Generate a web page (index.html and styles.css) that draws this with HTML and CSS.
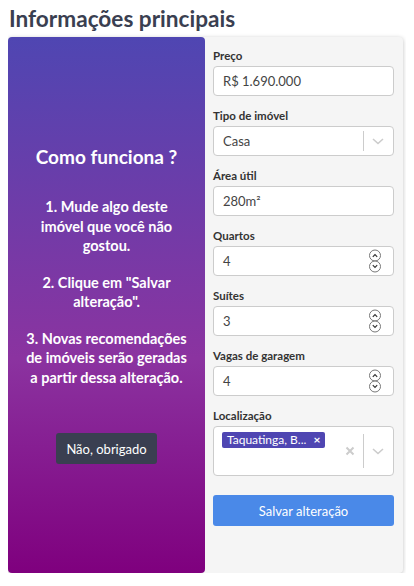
FILE: index.html
```html
<!DOCTYPE html>
<html lang="pt-BR">
<head>
<meta charset="utf-8">
<title>Informações principais</title>
<link rel="stylesheet" href="styles.css">
</head>
<body>
<h1 class="title">Informações principais</h1>
<div class="card">
  <div class="promo">
    <h2 class="promo-title">Como funciona ?</h2>
    <p class="promo-text">1. Mude algo deste imóvel que você não gostou.</p>
    <p class="promo-text">2. Clique em "Salvar alteração".</p>
    <p class="promo-text">3. Novas recomendações de imóveis serão geradas a partir dessa alteração.</p>
    <button class="btn-dark">Não, obrigado</button>
  </div>
  <form class="form">
    <div class="field">
      <label class="label">Preço</label>
      <div class="input"><span>R$ 1.690.000</span></div>
    </div>
    <div class="field">
      <label class="label">Tipo de imóvel</label>
      <div class="input select">
        <span class="value">Casa</span>
        <span class="sep"></span>
        <svg class="chev" width="20" height="20" viewBox="0 0 20 20"><path d="M5 8 L10 12.5 L15 8" fill="none" stroke="#ccc" stroke-width="1.6"/></svg>
      </div>
    </div>
    <div class="field">
      <label class="label">Área útil</label>
      <div class="input"><span>280m²</span></div>
    </div>
    <div class="field">
      <label class="label">Quartos</label>
      <div class="input number"><span class="value">4</span>
        <svg class="spin" width="14" height="26" viewBox="0 0 14 26"><circle cx="7" cy="7.5" r="5.5" fill="#fff" stroke="#777" stroke-width="1"/><path d="M4.8 8.8 L7 6.6 L9.2 8.8" fill="none" stroke="#333" stroke-width="1.2"/><circle cx="7" cy="18.5" r="5.5" fill="#fff" stroke="#777" stroke-width="1"/><path d="M4.8 17.2 L7 19.4 L9.2 17.2" fill="none" stroke="#333" stroke-width="1.2"/></svg>
      </div>
    </div>
    <div class="field">
      <label class="label">Suítes</label>
      <div class="input number"><span class="value">3</span>
        <svg class="spin" width="14" height="26" viewBox="0 0 14 26"><circle cx="7" cy="7.5" r="5.5" fill="#fff" stroke="#777" stroke-width="1"/><path d="M4.8 8.8 L7 6.6 L9.2 8.8" fill="none" stroke="#333" stroke-width="1.2"/><circle cx="7" cy="18.5" r="5.5" fill="#fff" stroke="#777" stroke-width="1"/><path d="M4.8 17.2 L7 19.4 L9.2 17.2" fill="none" stroke="#333" stroke-width="1.2"/></svg>
      </div>
    </div>
    <div class="field">
      <label class="label">Vagas de garagem</label>
      <div class="input number"><span class="value">4</span>
        <svg class="spin" width="14" height="26" viewBox="0 0 14 26"><circle cx="7" cy="7.5" r="5.5" fill="#fff" stroke="#777" stroke-width="1"/><path d="M4.8 8.8 L7 6.6 L9.2 8.8" fill="none" stroke="#333" stroke-width="1.2"/><circle cx="7" cy="18.5" r="5.5" fill="#fff" stroke="#777" stroke-width="1"/><path d="M4.8 17.2 L7 19.4 L9.2 17.2" fill="none" stroke="#333" stroke-width="1.2"/></svg>
      </div>
    </div>
    <div class="field">
      <label class="label">Localização</label>
      <div class="input multi">
        <div class="tags"><span class="tag">Taquatinga, B... <span class="tag-x">×</span></span></div>
        <svg class="clear" width="20" height="20" viewBox="0 0 20 20"><path d="M6.5 6.5 L13.5 13.5 M13.5 6.5 L6.5 13.5" stroke="#ccc" stroke-width="2"/></svg>
        <span class="sep tall"></span>
        <svg class="chev" width="20" height="20" viewBox="0 0 20 20"><path d="M5 8 L10 12.5 L15 8" fill="none" stroke="#ccc" stroke-width="1.6"/></svg>
      </div>
    </div>
    <button type="button" class="btn-primary">Salvar alteração</button>
  </form>
</div>
</body>
</html>
```
FILE: styles.css
```css
* { box-sizing: border-box; }
body {
  margin: 8px;
  font-family: Lato, "Open Sans", sans-serif;
  background: #fff;
}
.title {
  margin: 0 0 8px 1px;
  font-size: 22.6px;
  line-height: 21px;
  font-weight: 700;
  color: #3a3f51;
}
.card {
  width: 395px;
  height: 536px;
  display: flex;
  background: #f5f5f5;
  border-radius: 4px;
  box-shadow: 0 1px 4px rgba(0,0,0,0.25);
}
.promo {
  width: 197px;
  flex: none;
  border-radius: 4px;
  background: linear-gradient(to bottom, #4f46b2 0%, #8b33a0 60%, #7f007e 100%);
  color: #fff;
  display: flex;
  flex-direction: column;
  align-items: center;
  justify-content: center;
  text-align: center;
  padding: 0 16px;
}
.promo-title {
  margin: 0 0 29px;
  font-size: 19px;
  font-weight: 700;
  line-height: 22px;
}
.promo-text {
  margin: 0 0 17px;
  font-size: 14.5px;
  font-weight: 700;
  line-height: 19.5px;
}
.btn-dark {
  margin-top: 29px;
  font-family: inherit;
  font-size: 13px;
  color: #fff;
  background: #3a3f51;
  border: none;
  border-radius: 3px;
  height: 31px;
  padding: 0 10px;
}
.form {
  flex: 1;
  padding: 12px 9px 0 8px;
  display: flex;
  flex-direction: column;
}
.field {
  display: flex;
  flex-direction: column;
  margin-bottom: 13px;
}
.label {
  font-size: 11.5px;
  font-weight: 700;
  color: #333;
  line-height: 14px;
  margin-bottom: 3px;
}
.input {
  height: 30px;
  background: #fff;
  border: 1px solid #ccc;
  border-radius: 4px;
  display: flex;
  align-items: center;
  padding-left: 9px;
  font-size: 13px;
  color: #444;
}
.input .value { flex: 1; }
.sep {
  width: 1px;
  height: 20px;
  background: #ccc;
}
.sep.tall { height: 34px; }
.chev { margin: 0 5px 0 4px; }
.select { padding-right: 0; }
.number { padding-right: 11px; }
.spin { display: block; }
.multi {
  height: 50px;
  padding-left: 8px;
  align-items: center;
}
.tags {
  flex: 1;
  align-self: flex-start;
  padding-top: 4px;
}
.tag {
  display: inline-block;
  background: #4f46b2;
  color: #fff;
  font-size: 12px;
  line-height: 16px;
  padding: 0 5px 0 5px;
  border-radius: 2px;
}
.tag-x {
  font-weight: 700;
  margin-left: 4px;
}
.clear { margin-right: 3px; }
.btn-primary {
  margin-top: 6px;
  height: 31px;
  border: none;
  border-radius: 3px;
  background: #4a89e8;
  color: #fff;
  font-family: inherit;
  font-size: 13px;
}
```
